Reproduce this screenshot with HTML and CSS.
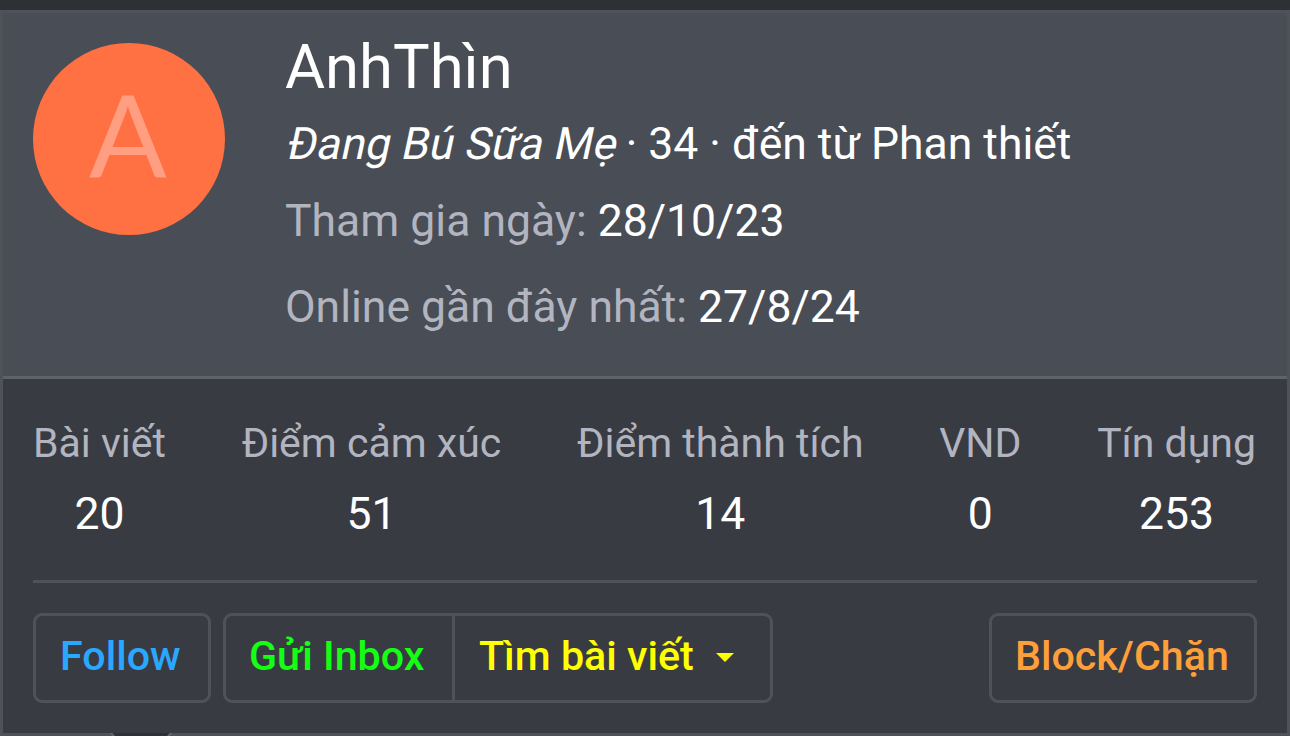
FILE: index.html
```html
<!DOCTYPE html>
<html lang="vi">
<head>
    <meta charset="UTF-8">
    <meta name="viewport" content="width=device-width, initial-scale=1.0">
    <title>AnhThìn</title>
    <link rel="stylesheet" href="styles.css">
</head>
<body>

    <div class="member-tooltip">
        <div class="tooltip-header">
            <div class="avatar">A</div>
            <div class="member-info">
                <h4 class="member-name">AnhThìn</h4>
                <div class="member-blurb"><span class="user-title">Đang Bú Sữa Mẹ</span> · 34 · đến từ Phan thiết</div>
                <div class="member-date"><span class="label">Tham gia ngày:</span> <span>28/10/23</span></div>
                <div class="member-date"><span class="label">Online gần đây nhất:</span> <span>27/8/24</span></div>
            </div>
        </div>

        <div class="tooltip-body">
            <div class="stats">
                <dl><dt>Bài viết</dt><dd>20</dd></dl>
                <dl><dt>Điểm cảm xúc</dt><dd>51</dd></dl>
                <dl><dt>Điểm thành tích</dt><dd>14</dd></dl>
                <dl><dt>VND</dt><dd>0</dd></dl>
                <dl><dt>Tín dụng</dt><dd>253</dd></dl>
            </div>

            <hr>

            <div class="actions">
                <button type="button" class="btn follow">Follow</button>
                <div class="btn-group">
                    <button type="button" class="btn inbox">Gửi Inbox</button>
                    <button type="button" class="btn search">Tìm bài viết <span class="caret"></span></button>
                </div>
                <button type="button" class="btn block">Block/Chặn</button>
            </div>
        </div>

        <svg class="arrow" viewBox="0 0 64 3" width="64" height="3">
            <path d="M3 0H61L58 3H6Z" fill="#312f38"/>
            <path d="M1.5 0L5 3M62.5 0L59 3" stroke="#65666d" stroke-width="2"/>
        </svg>
    </div>

</body>
</html>
```
FILE: styles.css
```css
* {
    box-sizing: border-box;
}
body {
    margin: 0;
    padding-top: 10px;
    height: 736px;
    overflow: hidden;
    background-color: #2d3035;
    color: #fff;
    font-family: Roboto, sans-serif;
    font-size: 44.5px;
}
.member-tooltip {
    position: relative;
    height: 726px;
    border: 3px solid #50525a;
    background: #393b43;
}
.tooltip-header {
    display: flex;
    gap: 60px;
    height: 366px;
    padding: 30px;
    background: #494d55;
    border-bottom: 3px solid #5f626a;
}
.avatar {
    width: 192px;
    height: 192px;
    border-radius: 50%;
    background: #ff7043;
    color: #ff9e80;
    font-family: Lato, sans-serif;
    font-size: 115px;
    line-height: 178px;
    text-align: center;
    text-indent: -2px;
}
.member-name {
    margin: 0 0 22px;
    font-size: 61.5px;
    font-weight: 400;
    line-height: 48px;
}
.member-blurb {
    line-height: 63px;
    margin-bottom: 14px;
}
.user-title {
    display: inline-block;
    transform: skewX(-12deg);
    transform-origin: 0 47px;
}
.member-date {
    line-height: 63px;
    margin-bottom: 23px;
}
.label {
    color: #b2b5c0;
}
.tooltip-body {
    padding: 37px 30px 30px;
}
.stats {
    display: flex;
    justify-content: space-between;
    padding-right: 1px;
    text-align: center;
}
.stats dl, .stats dd {
    margin: 0;
}
.stats dt {
    margin-bottom: 14px;
    color: #b2b5c0;
    font-size: 41px;
    line-height: 54px;
}
.stats dd {
    line-height: 60px;
}
hr {
    margin: 36px 0 30px;
    border: 0;
    border-top: 3px solid #505257;
}
.actions {
    display: flex;
    gap: 12px;
}
.btn {
    height: 90px;
    padding: 0 20px 4px 23px;
    border: 3px solid #505257;
    border-radius: 9px;
    background: none;
    font-family: inherit;
    font-size: 41.2px;
    font-weight: 500;
    line-height: 80px;
    text-align: left;
    white-space: nowrap;
    cursor: pointer;
}
.btn-group {
    display: flex;
    width: 550px;
}
.follow {
    width: 178px;
    padding-left: 24px;
    color: #2aa8ff;
}
.inbox {
    width: 232px;
    border-radius: 9px 0 0 9px;
    color: #14ff14;
}
.search {
    flex: 1;
    display: flex;
    align-items: center;
    margin-left: -3px;
    padding-left: 24px;
    border-radius: 0 9px 9px 0;
    color: #ffff00;
}
.block {
    width: 268px;
    margin-left: auto;
    color: #ff9f3a;
}
.caret {
    margin: 3px 0 0 22px;
    border: 9px solid transparent;
    border-top-color: #ffff00;
    border-bottom: 0;
}
/* tip of the pointer cut into the bottom edge */
.arrow {
    position: absolute;
    left: 106px;
    bottom: -3px;
}
```
